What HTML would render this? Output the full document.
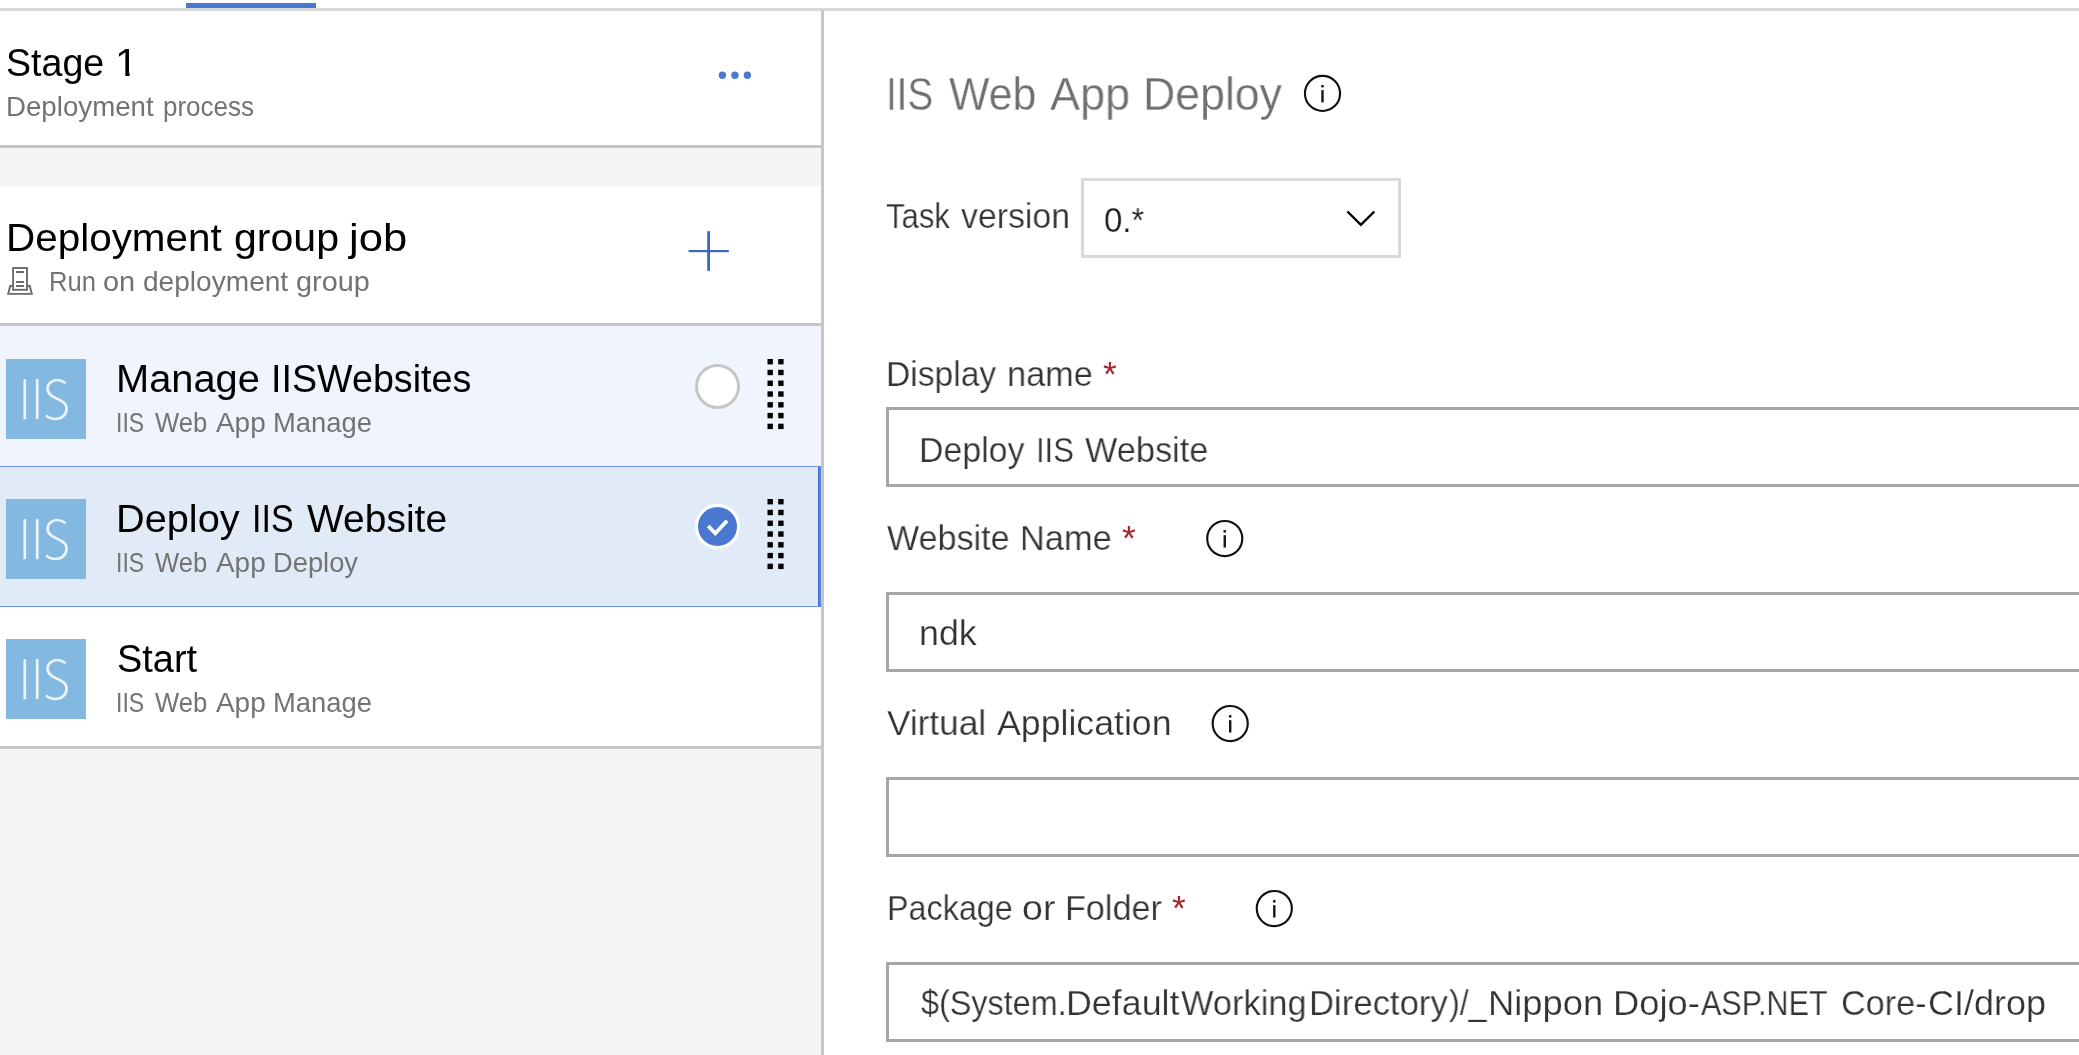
<!DOCTYPE html>
<html lang="en">
<head>
<meta charset="utf-8">
<title>Stage 1 - Tasks</title>
<style>
html,body{margin:0;padding:0}
body{width:2079px;height:1055px;position:relative;overflow:hidden;background:#fff;font-family:"Liberation Sans", sans-serif;}
.abs,.t,.iis{position:absolute}
.t{white-space:nowrap;transform-origin:0 0;}
.t.g{will-change:transform;}
.iis{left:6px;width:80px;height:80px;background:#83b8e0}
.inp{position:absolute;left:886px;width:1300px;height:74px;border:3px solid #a6a6a6;background:#fff;box-sizing:content-box}
svg.ov{position:absolute;left:0;top:0}
</style>
</head>
<body>
<!-- top bar -->
<div class="abs" style="left:0;top:8px;width:2079px;height:3px;background:#d8d8d8"></div>
<div class="abs" style="left:186px;top:3px;width:130px;height:5px;background:#4a78cf"></div>

<!-- left panel backgrounds -->
<div class="abs" style="left:0;top:148px;width:821px;height:38px;background:#f4f4f4"></div>
<div class="abs" style="left:0;top:145px;width:821px;height:3px;background:#c6c6c6"></div>
<div class="abs" style="left:0;top:323px;width:821px;height:3px;background:#c6c6c6"></div>
<div class="abs" style="left:0;top:326px;width:821px;height:140px;background:#f0f5fd"></div>
<div class="abs" style="left:0;top:466px;width:818px;height:138.5px;background:#e1ebf8;border-top:1.3px solid #6b8ff5;border-bottom:1.3px solid #6b8ff5;border-right:3px solid #4f78d2"></div>
<div class="abs" style="left:818px;top:467px;width:3px;height:138px;background:linear-gradient(to right,#3f69b9,#5b82e0 60%,#6b8ff5)"></div>
<div class="abs" style="left:0;top:746px;width:821px;height:3px;background:#c6c6c6"></div>
<div class="abs" style="left:0;top:749px;width:821px;height:306px;background:#f4f4f4"></div>
<div class="abs" style="left:821px;top:10px;width:3px;height:1045px;background:#c6c6c6"></div>

<div class="iis" style="top:359px"><svg width="80" height="80" viewBox="0 0 80 80"><g fill="none" stroke="#edf4fb" stroke-width="2.7" stroke-linecap="butt" style="filter:blur(0.45px)"><path d="M18.8 20.2V60.2"/><path d="M31.2 20.2V60.2"/><path d="M59.6 24.2C57.2 22.2 54.6 21 51.6 21C45.8 21 41.6 24.8 41.6 29.8C41.6 35 45.8 37.2 50.8 39.6C56 42 60.6 44.4 60.6 49.6C60.6 55.6 56 60 49.6 60C45.8 60 42.4 58.6 40.2 56.4"/></g></svg></div>
<div class="iis" style="top:499px"><svg width="80" height="80" viewBox="0 0 80 80"><g fill="none" stroke="#edf4fb" stroke-width="2.7" stroke-linecap="butt" style="filter:blur(0.45px)"><path d="M18.8 20.2V60.2"/><path d="M31.2 20.2V60.2"/><path d="M59.6 24.2C57.2 22.2 54.6 21 51.6 21C45.8 21 41.6 24.8 41.6 29.8C41.6 35 45.8 37.2 50.8 39.6C56 42 60.6 44.4 60.6 49.6C60.6 55.6 56 60 49.6 60C45.8 60 42.4 58.6 40.2 56.4"/></g></svg></div>
<div class="iis" style="top:639px"><svg width="80" height="80" viewBox="0 0 80 80"><g fill="none" stroke="#edf4fb" stroke-width="2.7" stroke-linecap="butt" style="filter:blur(0.45px)"><path d="M18.8 20.2V60.2"/><path d="M31.2 20.2V60.2"/><path d="M59.6 24.2C57.2 22.2 54.6 21 51.6 21C45.8 21 41.6 24.8 41.6 29.8C41.6 35 45.8 37.2 50.8 39.6C56 42 60.6 44.4 60.6 49.6C60.6 55.6 56 60 49.6 60C45.8 60 42.4 58.6 40.2 56.4"/></g></svg></div>

<!-- form inputs -->
<div class="abs" style="left:1081px;top:178px;width:314px;height:74px;border:3px solid #d9d9d9"></div>
<div class="inp" style="top:407px"></div>
<div class="inp" style="top:592px"></div>
<div class="inp" style="top:777px"></div>
<div class="inp" style="top:962px"></div>

<!-- icons -->
<svg class="ov" width="2079" height="1055" viewBox="0 0 2079 1055">
  <g fill="#4a78cf"><circle cx="722.4" cy="75.2" r="3.7"/><circle cx="734.9" cy="75.2" r="3.7"/><circle cx="747.4" cy="75.2" r="3.7"/></g>
  <g fill="#3c68bd"><rect x="707.2" y="231.2" width="2.8" height="39.7"/><rect x="688.6" y="250" width="40.2" height="2.2"/></g>
  <!-- deployment group icon -->
  <g fill="none" stroke="#6a6a6a" stroke-width="1.9">
    <rect x="13.1" y="268" width="13.9" height="21.8"/>
    <path d="M16 272H24M16 282H24M16 286H24"/>
    <path d="M13 286H10.2L8.2 293.9H31.8L29.8 286H27"/>
  </g>
  <!-- radio / check -->
  <circle cx="717.5" cy="386.5" r="21" fill="#fff" stroke="#c6c6c6" stroke-width="3"/>
  <circle cx="717.5" cy="526.5" r="21" fill="#4a78cf" stroke="#fff" stroke-width="3"/>
  <path d="M708.2 526.0L715.3 533.3L727.1 520.8" fill="none" stroke="#fff" stroke-width="3.8"/>
  <g fill="#000"><rect x="767.50" y="359.00" width="5.4" height="5.4"/><rect x="778.20" y="359.00" width="5.4" height="5.4"/><rect x="767.50" y="369.78" width="5.4" height="5.4"/><rect x="778.20" y="369.78" width="5.4" height="5.4"/><rect x="767.50" y="380.56" width="5.4" height="5.4"/><rect x="778.20" y="380.56" width="5.4" height="5.4"/><rect x="767.50" y="391.34" width="5.4" height="5.4"/><rect x="778.20" y="391.34" width="5.4" height="5.4"/><rect x="767.50" y="402.12" width="5.4" height="5.4"/><rect x="778.20" y="402.12" width="5.4" height="5.4"/><rect x="767.50" y="412.90" width="5.4" height="5.4"/><rect x="778.20" y="412.90" width="5.4" height="5.4"/><rect x="767.50" y="423.68" width="5.4" height="5.4"/><rect x="778.20" y="423.68" width="5.4" height="5.4"/><rect x="767.50" y="499.00" width="5.4" height="5.4"/><rect x="778.20" y="499.00" width="5.4" height="5.4"/><rect x="767.50" y="509.78" width="5.4" height="5.4"/><rect x="778.20" y="509.78" width="5.4" height="5.4"/><rect x="767.50" y="520.56" width="5.4" height="5.4"/><rect x="778.20" y="520.56" width="5.4" height="5.4"/><rect x="767.50" y="531.34" width="5.4" height="5.4"/><rect x="778.20" y="531.34" width="5.4" height="5.4"/><rect x="767.50" y="542.12" width="5.4" height="5.4"/><rect x="778.20" y="542.12" width="5.4" height="5.4"/><rect x="767.50" y="552.90" width="5.4" height="5.4"/><rect x="778.20" y="552.90" width="5.4" height="5.4"/><rect x="767.50" y="563.68" width="5.4" height="5.4"/><rect x="778.20" y="563.68" width="5.4" height="5.4"/></g>
  <!-- chevron -->
  <path d="M1347.4 211.5L1360.85 224.8L1374.3 211.5" fill="none" stroke="#000" stroke-width="2.45"/>
  <!-- info icons -->
  <g transform="translate(1322.5,93.4)"><circle r="17.55" fill="none" stroke="#111" stroke-width="2.15"/><rect x="-1.2" y="-3.3" width="2.4" height="12.3" fill="#151515"/><rect x="-1.25" y="-8.4" width="2.5" height="2.45" fill="#151515"/></g>
  <g transform="translate(1224.75,538.5)"><circle r="17.55" fill="none" stroke="#111" stroke-width="2.15"/><rect x="-1.2" y="-3.3" width="2.4" height="12.3" fill="#151515"/><rect x="-1.25" y="-8.4" width="2.5" height="2.45" fill="#151515"/></g>
  <g transform="translate(1230.2,723.5)"><circle r="17.55" fill="none" stroke="#111" stroke-width="2.15"/><rect x="-1.2" y="-3.3" width="2.4" height="12.3" fill="#151515"/><rect x="-1.25" y="-8.4" width="2.5" height="2.45" fill="#151515"/></g>
  <g transform="translate(1274.3,908.5)"><circle r="17.55" fill="none" stroke="#111" stroke-width="2.15"/><rect x="-1.2" y="-3.3" width="2.4" height="12.3" fill="#151515"/><rect x="-1.25" y="-8.4" width="2.5" height="2.45" fill="#151515"/></g>
</svg>

<!-- texts -->
<div class="t" style="left:6.03px;top:43.00px;font-size:39.4px;line-height:39.4px;color:#000;transform:scaleX(0.9541)">Stage</div>
<div class="t one" style="left:114.93px;top:43.00px;font-size:39.4px;line-height:39.4px;color:#000;transform:scaleX(1.0450);clip-path:polygon(0 0,100% 0,100% 30px,13.95px 30px,13.95px 100%,9.85px 100%,9.85px 30px,0 30px)">1</div>
<div class="t" style="left:5.95px;top:93.00px;font-size:28.0px;line-height:28.0px;color:#737373;transform:scaleX(0.9883)">Deployment</div>
<div class="t" style="left:163.30px;top:93.00px;font-size:28.0px;line-height:28.0px;color:#737373;transform:scaleX(0.9285)">process</div>
<div class="t" style="left:6.07px;top:218.00px;font-size:39.4px;line-height:39.4px;color:#000;transform:scaleX(1.0265)">Deployment</div>
<div class="t" style="left:234.00px;top:218.00px;font-size:39.4px;line-height:39.4px;color:#000;transform:scaleX(1.0424)">group</div>
<div class="t" style="left:348.92px;top:218.00px;font-size:39.4px;line-height:39.4px;color:#000;transform:scaleX(1.1067)">job</div>
<div class="t" style="left:49.01px;top:268.00px;font-size:28.0px;line-height:28.0px;color:#737373;transform:scaleX(0.9136)">Run</div>
<div class="t" style="left:103.23px;top:268.00px;font-size:28.0px;line-height:28.0px;color:#737373;transform:scaleX(1.0334)">on</div>
<div class="t" style="left:142.67px;top:268.00px;font-size:28.0px;line-height:28.0px;color:#737373;transform:scaleX(1.0028)">deployment</div>
<div class="t" style="left:295.84px;top:268.00px;font-size:28.0px;line-height:28.0px;color:#737373;transform:scaleX(1.0301)">group</div>
<div class="t" style="left:115.82px;top:359.00px;font-size:39.4px;line-height:39.4px;color:#000;transform:scaleX(1.0109)">Manage</div>
<div class="t" style="left:270.92px;top:359.00px;font-size:39.4px;line-height:39.4px;color:#000;transform:scaleX(0.9564)">IISWebsites</div>
<div class="t" style="left:116.31px;top:409.00px;font-size:28.0px;line-height:28.0px;color:#737373;transform:scaleX(0.8223)">IIS</div>
<div class="t" style="left:154.64px;top:409.00px;font-size:28.0px;line-height:28.0px;color:#737373;transform:scaleX(0.9152)">Web</div>
<div class="t" style="left:216.23px;top:409.00px;font-size:28.0px;line-height:28.0px;color:#737373;transform:scaleX(0.9965)">App</div>
<div class="t" style="left:272.97px;top:409.00px;font-size:28.0px;line-height:28.0px;color:#737373;transform:scaleX(0.9779)">Manage</div>
<div class="t" style="left:115.72px;top:499.00px;font-size:39.4px;line-height:39.4px;color:#000;transform:scaleX(1.0083)">Deploy</div>
<div class="t" style="left:252.03px;top:499.00px;font-size:39.4px;line-height:39.4px;color:#000;transform:scaleX(0.8633)">IIS</div>
<div class="t" style="left:306.61px;top:499.00px;font-size:39.4px;line-height:39.4px;color:#000;transform:scaleX(0.9895)">Website</div>
<div class="t" style="left:116.31px;top:549.00px;font-size:28.0px;line-height:28.0px;color:#737373;transform:scaleX(0.8223)">IIS</div>
<div class="t" style="left:154.64px;top:549.00px;font-size:28.0px;line-height:28.0px;color:#737373;transform:scaleX(0.9152)">Web</div>
<div class="t" style="left:216.23px;top:549.00px;font-size:28.0px;line-height:28.0px;color:#737373;transform:scaleX(0.9965)">App</div>
<div class="t" style="left:273.38px;top:549.00px;font-size:28.0px;line-height:28.0px;color:#737373;transform:scaleX(0.9752)">Deploy</div>
<div class="t" style="left:116.51px;top:639.00px;font-size:39.4px;line-height:39.4px;color:#000;transform:scaleX(0.9632)">Start</div>
<div class="t" style="left:116.31px;top:689.00px;font-size:28.0px;line-height:28.0px;color:#737373;transform:scaleX(0.8223)">IIS</div>
<div class="t" style="left:154.64px;top:689.00px;font-size:28.0px;line-height:28.0px;color:#737373;transform:scaleX(0.9152)">Web</div>
<div class="t" style="left:216.23px;top:689.00px;font-size:28.0px;line-height:28.0px;color:#737373;transform:scaleX(0.9965)">App</div>
<div class="t" style="left:272.97px;top:689.00px;font-size:28.0px;line-height:28.0px;color:#737373;transform:scaleX(0.9779)">Manage</div>
<div class="t g" style="left:886.41px;top:72.00px;font-size:45.4px;line-height:45.4px;color:#707070;transform:scaleX(0.8495);-webkit-text-stroke:0.3px #fff">IIS</div>
<div class="t g" style="left:949.09px;top:72.00px;font-size:45.4px;line-height:45.4px;color:#707070;transform:scaleX(0.9435);-webkit-text-stroke:0.3px #fff">Web</div>
<div class="t g" style="left:1049.58px;top:72.00px;font-size:45.4px;line-height:45.4px;color:#707070;transform:scaleX(0.9921);-webkit-text-stroke:0.3px #fff">App</div>
<div class="t g" style="left:1143.26px;top:72.00px;font-size:45.4px;line-height:45.4px;color:#707070;transform:scaleX(0.9837);-webkit-text-stroke:0.3px #fff">Deploy</div>
<div class="t g" style="left:886.24px;top:199.00px;font-size:35.4px;line-height:35.4px;color:#333333;transform:scaleX(0.8772);-webkit-text-stroke:0.25px #fff">Task</div>
<div class="t g" style="left:961.29px;top:199.00px;font-size:35.4px;line-height:35.4px;color:#333333;transform:scaleX(0.9552);-webkit-text-stroke:0.25px #fff">version</div>
<div class="t g" style="left:1103.80px;top:203.00px;font-size:35.4px;line-height:35.4px;color:#1a1a1a;transform:scaleX(0.9280);-webkit-text-stroke:0.25px #fff">0.*</div>
<div class="t g" style="left:886.09px;top:357.00px;font-size:35.4px;line-height:35.4px;color:#333333;transform:scaleX(0.9499);-webkit-text-stroke:0.25px #fff">Display</div>
<div class="t g" style="left:1007.27px;top:357.00px;font-size:35.4px;line-height:35.4px;color:#333333;transform:scaleX(0.9702);-webkit-text-stroke:0.25px #fff">name</div>
<div class="t star g" style="left:1103.07px;top:356.00px;font-size:35.3px;line-height:35.3px;color:#a4262c;transform:scaleX(1.0000)">*</div>
<div class="t g" style="left:919.07px;top:433.00px;font-size:35.4px;line-height:35.4px;color:#333333;transform:scaleX(0.9573);-webkit-text-stroke:0.25px #fff">Deploy</div>
<div class="t g" style="left:1036.47px;top:433.00px;font-size:35.4px;line-height:35.4px;color:#333333;transform:scaleX(0.8741);-webkit-text-stroke:0.25px #fff">IIS</div>
<div class="t g" style="left:1085.19px;top:433.00px;font-size:35.4px;line-height:35.4px;color:#333333;transform:scaleX(0.9695);-webkit-text-stroke:0.25px #fff">Website</div>
<div class="t g" style="left:886.99px;top:521.00px;font-size:35.4px;line-height:35.4px;color:#333333;transform:scaleX(0.9631);-webkit-text-stroke:0.25px #fff">Website</div>
<div class="t g" style="left:1019.64px;top:521.00px;font-size:35.4px;line-height:35.4px;color:#333333;transform:scaleX(0.9713);-webkit-text-stroke:0.25px #fff">Name</div>
<div class="t star g" style="left:1122.07px;top:520.00px;font-size:35.3px;line-height:35.3px;color:#a4262c;transform:scaleX(1.0000)">*</div>
<div class="t g" style="left:918.67px;top:616.00px;font-size:35.4px;line-height:35.4px;color:#333333;transform:scaleX(1.0114);-webkit-text-stroke:0.25px #fff">ndk</div>
<div class="t g" style="left:886.57px;top:706.00px;font-size:35.4px;line-height:35.4px;color:#333333;transform:scaleX(0.9939);-webkit-text-stroke:0.25px #fff">Virtual</div>
<div class="t g" style="left:996.86px;top:706.00px;font-size:35.4px;line-height:35.4px;color:#333333;transform:scaleX(1.0081);-webkit-text-stroke:0.25px #fff">Application</div>
<div class="t g" style="left:886.58px;top:891.00px;font-size:35.4px;line-height:35.4px;color:#333333;transform:scaleX(0.9131);-webkit-text-stroke:0.25px #fff">Package</div>
<div class="t g" style="left:1021.59px;top:891.00px;font-size:35.4px;line-height:35.4px;color:#333333;transform:scaleX(1.0617);-webkit-text-stroke:0.25px #fff">or</div>
<div class="t g" style="left:1064.65px;top:891.00px;font-size:35.4px;line-height:35.4px;color:#333333;transform:scaleX(0.9665);-webkit-text-stroke:0.25px #fff">Folder</div>
<div class="t star g" style="left:1172.02px;top:890.00px;font-size:35.3px;line-height:35.3px;color:#a4262c;transform:scaleX(1.0000)">*</div>
<div class="t g" style="left:920.50px;top:986.00px;font-size:35.4px;line-height:35.4px;color:#333333;transform:scaleX(0.9138);-webkit-text-stroke:0.25px #fff">$(System.</div>
<div class="t g" style="left:1065.84px;top:986.00px;font-size:35.4px;line-height:35.4px;color:#333333;transform:scaleX(1.0117);-webkit-text-stroke:0.25px #fff">Default</div>
<div class="t g" style="left:1181.09px;top:986.00px;font-size:35.4px;line-height:35.4px;color:#333333;transform:scaleX(0.9723);-webkit-text-stroke:0.25px #fff">Working</div>
<div class="t g" style="left:1308.62px;top:986.00px;font-size:35.4px;line-height:35.4px;color:#333333;transform:scaleX(0.9798);-webkit-text-stroke:0.25px #fff">Directory</div>
<div class="t g" style="left:1448.78px;top:986.00px;font-size:35.4px;line-height:35.4px;color:#333333;transform:scaleX(0.9131);-webkit-text-stroke:0.25px #fff">)/_</div>
<div class="t g" style="left:1487.80px;top:986.00px;font-size:35.4px;line-height:35.4px;color:#333333;transform:scaleX(1.0285);-webkit-text-stroke:0.25px #fff">Nippon</div>
<div class="t g" style="left:1613.11px;top:986.00px;font-size:35.4px;line-height:35.4px;color:#333333;transform:scaleX(1.0255);-webkit-text-stroke:0.25px #fff">Dojo-</div>
<div class="t g" style="left:1700.89px;top:986.00px;font-size:35.4px;line-height:35.4px;color:#333333;transform:scaleX(0.8617);-webkit-text-stroke:0.25px #fff">ASP.NET</div>
<div class="t g" style="left:1841.13px;top:986.00px;font-size:35.4px;line-height:35.4px;color:#333333;transform:scaleX(0.9670);-webkit-text-stroke:0.25px #fff">Core-</div>
<div class="t g" style="left:1928.26px;top:986.00px;font-size:35.4px;line-height:35.4px;color:#333333;transform:scaleX(1.0170);-webkit-text-stroke:0.25px #fff">CI/drop</div>
</body>
</html>
